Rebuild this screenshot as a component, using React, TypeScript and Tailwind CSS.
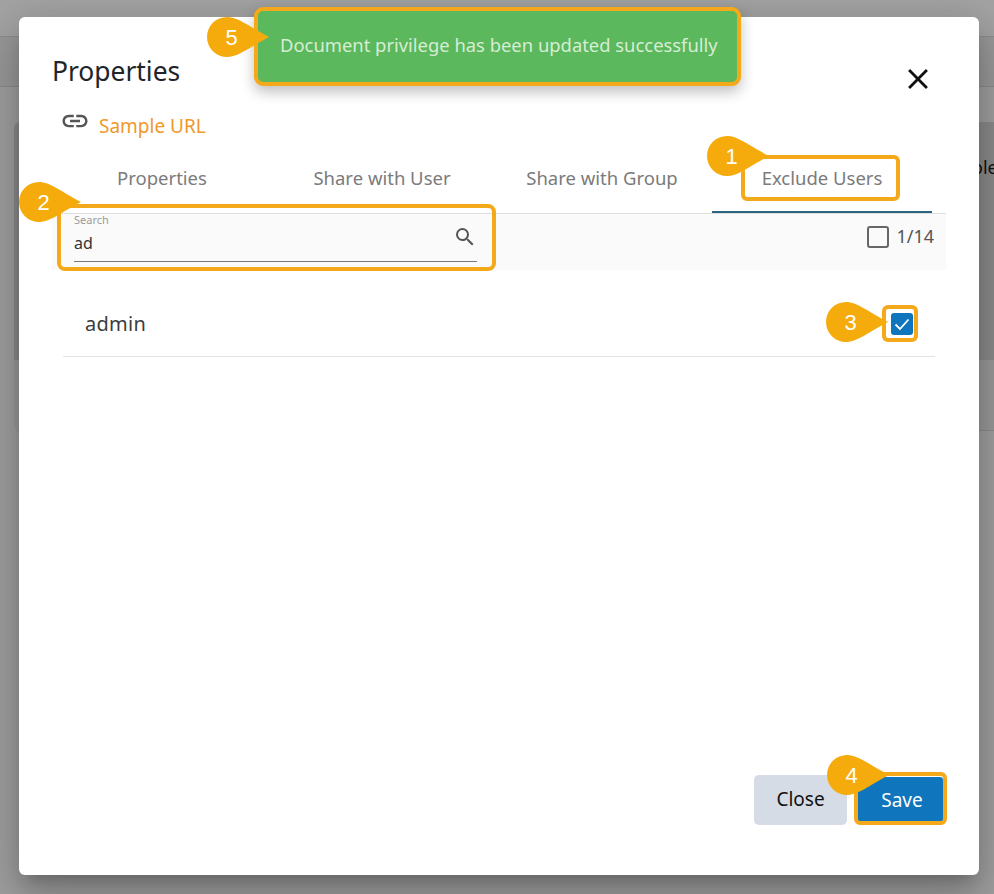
import { MdClose, MdLink, MdSearch } from 'react-icons/md';

const tabs = ['Properties', 'Share with User', 'Share with Group', 'Exclude Users'];

// numbered drop-shaped marker, tip points right
function Marker({ n, className }: { n: number; className: string }) {
  return (
    <div className={`absolute w-[62px] h-10 ${className}`}>
      <svg width="62" height="40" viewBox="0 0 62 40" className="absolute inset-0">
        <path d="M20 0C31 0 41 9 62 20C41 31 31 40 20 40A20 20 0 0 1 20 0Z" fill="#f6ab0c" />
      </svg>
      <span className="absolute left-0 top-0 w-[49px] h-10 flex items-center justify-center text-white text-[22px] font-['Liberation_Sans',sans-serif]">
        {n}
      </span>
    </div>
  );
}

export default function App() {
  return (
    <div className="relative w-[994px] h-[894px] overflow-hidden bg-[#a0a0a0] flex flex-col font-['Noto_Sans',sans-serif]">
      {/* page behind the overlay */}
      <div className="h-[37px] shrink-0 border-b border-[#8e8e8e] bg-[#a3a3a3]" />
      <div className="h-[50px] shrink-0 border-b border-[#8c8c8c] bg-[#999999]" />
      <div className="ml-[14px] mt-[35px] h-[309px] rounded-l-[6px] flex flex-col overflow-hidden">
        <div className="h-[238px] bg-[#8b8b8b] flex justify-end pt-[30px] text-[18px] text-[#111] leading-[30px]">
          <span className="w-[22px] overflow-hidden">ole</span>
        </div>
        <div className="flex-1 bg-[#9a9a9a] border-b border-[#8c8c8c]" />
      </div>

      {/* dialog */}
      <div className="absolute left-[19px] top-[17px] w-[960px] h-[858px] bg-white rounded-[6px] flex flex-col shadow-[0_11px_15px_-7px_rgba(0,0,0,0.2),0_24px_38px_3px_rgba(0,0,0,0.14),0_9px_46px_8px_rgba(0,0,0,0.12)]">
        <div className="flex items-start justify-between pl-[33px] pr-[44px] pt-[35px]">
          <h2 className="text-[26.4px] leading-[38px] text-[#212529]">Properties</h2>
          <MdClose size={34} className="text-[#111] mt-[10px]" />
        </div>
        <div className="flex items-center gap-[9px] pl-[41px] mt-[12px] h-[36px]">
          <MdLink size={30} className="text-[#555] -mt-[10px]" />
          <span className="text-[19px] text-[#f0982a]">Sample URL</span>
        </div>

        <div className="flex pl-[33px] mt-[12px] h-[57px]">
          {tabs.map((t, i) => (
            <div
              key={t}
              className={`w-[220px] flex items-start justify-center pt-[7px] text-[18.5px] leading-[30px] text-[#7b7b7b] ${i === 3 ? 'border-b-2 border-[#2a6483]' : ''}`}
            >
              {t}
            </div>
          ))}
        </div>

        <div className="mx-[33px] h-[57px] bg-[#fafafa] border-t border-[#dedede] flex items-start justify-between pl-[22px] pr-[12px]">
          <div className="relative w-[403px] h-[48px] border-b border-[#777]">
            <span className="absolute left-0 -top-[1px] text-[11px] leading-[14px] text-[#9a9a9a]">Search</span>
            <span className="absolute left-0 top-[17px] text-[16px] leading-[24px] text-[#333]">ad</span>
            <MdSearch size={24} className="absolute right-0 top-[11px] text-[#555]" />
          </div>
          <div className="flex items-center gap-[7px] mt-[9px]">
            <div className="w-[22px] h-[22px] rounded-[3px] border-2 border-[#666]" />
            <span className="text-[18px] text-[#555]">1/14</span>
          </div>
        </div>

        <div className="mx-[44px] h-[87px] pt-[22px] border-b border-[#e2e2e2] flex items-center justify-between pl-[22px] pr-[22px]">
          <span className="text-[20px] text-[#3c3c3c] tracking-[0.3px]">admin</span>
          <div className="w-[22px] h-[22px] rounded-[3px] bg-[#0f75bc] flex items-center justify-center">
            <svg width="16" height="16" viewBox="0 0 16 16" fill="none">
              <path d="M1.5 8.5L6 13L14.5 3.5" stroke="white" strokeWidth="1.8" />
            </svg>
          </div>
        </div>

        <div className="mt-auto flex justify-end gap-[11px] pr-[36px] pb-[50px] items-center">
          <button className="w-[93px] h-[50px] pb-[2px] rounded-[5px] bg-[#d6dce5] text-[19px] text-[#111]">Close</button>
          <button className="w-[85px] h-[46px] pl-[3px] rounded-[3px] bg-[#0f75bc] text-[19px] text-white">Save</button>
        </div>
      </div>

      {/* toast */}
      <div className="absolute left-[254px] top-[7px] w-[487px] h-[79px] rounded-[9px] border-4 border-[#f4a91a] bg-[#5cb85c] pl-[22px] pt-[19px] text-[18.4px] leading-[30px] text-[#d6edd6] shadow-[0_6px_14px_rgba(0,0,0,0.25)]">
        Document privilege has been updated successfully
      </div>

      {/* highlight boxes */}
      <div className="absolute left-[741px] top-[155px] w-[159px] h-[46px] rounded-[6px] border-4 border-[#f4a91a]" />
      <div className="absolute left-[57px] top-[204px] w-[439px] h-[67px] rounded-[8px] border-4 border-[#f4a91a]" />
      <div className="absolute left-[882px] top-[305px] w-[36px] h-[37px] rounded-[6px] border-4 border-[#f4a91a]" />
      <div className="absolute left-[854px] top-[772px] w-[93px] h-[53px] rounded-[6px] border-4 border-[#f4a91a]" />

      <Marker n={5} className="left-[207px] top-[17px]" />
      <Marker n={1} className="left-[707px] top-[136px]" />
      <Marker n={2} className="left-[19px] top-[182px]" />
      <Marker n={3} className="left-[826px] top-[302px]" />
      <Marker n={4} className="left-[827px] top-[755px]" />
    </div>
  );
}
